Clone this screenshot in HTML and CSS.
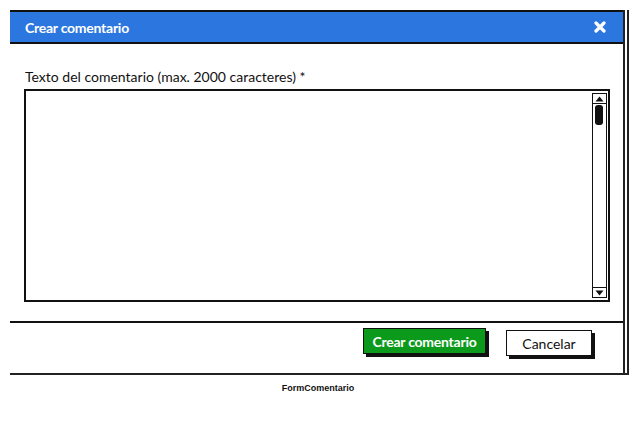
FILE: index.html
```html
<!DOCTYPE html>
<html lang="es">
<head>
<meta charset="utf-8">
<title>FormComentario</title>
<link rel="stylesheet" href="styles.css">
</head>
<body>
<div class="page">
  <div class="window">
    <div class="inner">
      <div class="titlebar">
        <span class="title">Crear comentario</span>
        <svg class="close" width="12" height="12" viewBox="0 0 12 12"><path d="M2 2 L10 10 M10 2 L2 10" stroke="#fff" stroke-width="3.2" stroke-linecap="round"/></svg>
      </div>
      <div class="content">
        <div class="label">Texto del comentario (max. 2000 caracteres) *</div>
        <div class="textarea">
          <div class="scrollbar">
            <div class="arrow up"><svg width="9" height="6" viewBox="0 0 9 6"><path d="M0.5 5.5 L4.5 0.5 L8.5 5.5 Z" fill="#111"/></svg></div>
            <div class="track"><div class="thumb"></div></div>
            <div class="arrow down"><svg width="9" height="6" viewBox="0 0 9 6"><path d="M0.5 0.5 L4.5 5.5 L8.5 0.5 Z" fill="#111"/></svg></div>
          </div>
        </div>
      </div>
      <div class="footer">
        <button class="btn primary">Crear comentario</button>
        <button class="btn secondary">Cancelar</button>
      </div>
    </div>
  </div>
  <div class="caption">FormComentario</div>
</div>
</body>
</html>
```

FILE: styles.css
```css
* { box-sizing: border-box; }
html, body { margin: 0; padding: 0; background: #fff; }
body { font-family: "Lato", "Open Sans", sans-serif; color: #111; }

.page { width: 640px; height: 431px; padding-top: 10px; }

.window {
  margin-left: 10px;
  width: 619px;
  padding-right: 2px;
  border-right: 2px solid #222;
  border-bottom: 2px solid #222;
}

.inner {
  border-right: 2px solid #222;
}

.titlebar {
  height: 34px;
  background: #2b77df;
  border-top: 2px solid #111;
  border-bottom: 2px solid #111;
  display: flex;
  align-items: center;
  justify-content: space-between;
  padding: 0 17px 0 15px;
}

.title {
  color: #fff;
  font-weight: 700;
  font-size: 14px;
  letter-spacing: -0.25px;
}

.close { display: block; }

.content {
  padding: 25px 13px 0 14px;
  height: 277px;
}

.label {
  font-size: 14px;
  line-height: 16px;
  margin-left: 1px;
  margin-bottom: 4px;
}

.textarea {
  height: 213px;
  border: 2px solid #111;
  display: flex;
  justify-content: flex-end;
  padding: 2px 1px 2px 0;
}

.scrollbar {
  width: 15px;
  border: 1.5px solid #111;
  display: flex;
  flex-direction: column;
}

.arrow {
  height: 10px;
  display: flex;
  align-items: center;
  justify-content: center;
}
.arrow.up { border-bottom: 1.5px solid #111; }
.arrow.down { border-top: 1.5px solid #111; }

.track { flex: 1; padding: 1px 2px; }
.thumb {
  width: 8px;
  height: 20px;
  background: #111;
  border-radius: 3px;
}

.footer {
  height: 52px;
  border-top: 2px solid #111;
  display: flex;
  align-items: flex-start;
  justify-content: flex-end;
  padding: 5px 31px 0 0;
  gap: 20px;
}

.btn {
  font-family: "Lato", "Open Sans", sans-serif;
  font-size: 14px;
  cursor: pointer;
  padding: 0;
}

.btn.primary {
  width: 123px;
  height: 26px;
  background: #0c9a1d;
  color: #fff;
  font-weight: 700;
  letter-spacing: -0.25px;
  border: 1.5px solid #111;
  box-shadow: 3px 3px 0 #111;
}

.btn.secondary {
  margin-top: 2px;
  width: 86px;
  height: 26px;
  background: #fff;
  color: #111;
  font-weight: 400;
  border: 1.5px solid #111;
  box-shadow: 3px 3px 0 #111;
}

.caption {
  margin-top: 8px;
  text-align: center;
  font-family: "Liberation Sans", sans-serif;
  font-weight: 700;
  font-size: 9px;
  padding-right: 4px;
  color: #111;
}
```
